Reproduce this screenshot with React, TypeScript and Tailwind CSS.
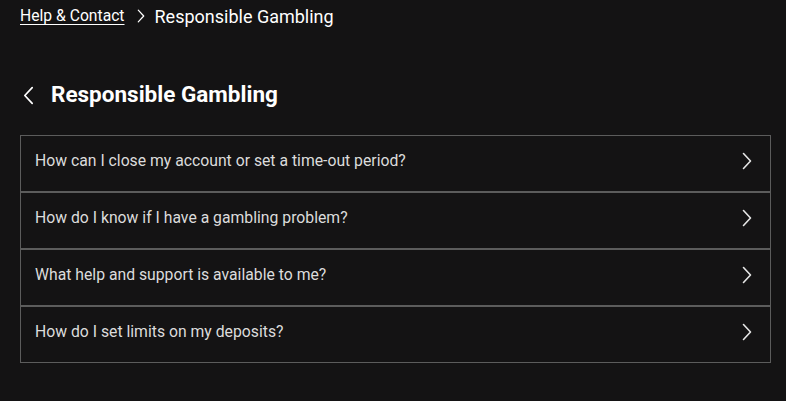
import React from "react";

const Chevron = ({ className = "" }: { className?: string }) => (
  <svg className={className} viewBox="0 0 10 18" fill="none" stroke="currentColor" strokeWidth="1.6" strokeLinecap="round" strokeLinejoin="round">
    <path d="M1.5 1.5 L8.5 9 L1.5 16.5" />
  </svg>
);

const ChevronLeft = ({ className = "" }: { className?: string }) => (
  <svg className={className} viewBox="0 0 10 18" fill="none" stroke="currentColor" strokeWidth="1.6" strokeLinecap="round" strokeLinejoin="round">
    <path d="M8.5 1.5 L1.5 9 L8.5 16.5" />
  </svg>
);

const questions = [
  "How can I close my account or set a time-out period?",
  "How do I know if I have a gambling problem?",
  "What help and support is available to me?",
  "How do I set limits on my deposits?",
];

export default function App() {
  return (
    <div className="min-h-[401px] w-full bg-[#141314] text-white px-5" style={{ fontFamily: "Roboto, 'Liberation Sans', sans-serif" }}>
      <div className="flex items-center h-[32px]">
        <a className="text-[15.7px] text-white underline underline-offset-[3px] decoration-1">Help &amp; Contact</a>
        <Chevron className="w-[8px] h-[14px] ml-[12px] mr-[10px] text-white" />
        <span className="text-[18px] text-white">Responsible Gambling</span>
      </div>
      <div className="flex items-center h-[58px] mt-[34px]">
        <ChevronLeft className="w-[11px] h-[19px] ml-[3px] text-white" />
        <h1 className="ml-[17px] text-[22.5px] font-bold">Responsible Gambling</h1>
      </div>
      <div className="mt-[11px] w-[751px]">
        {questions.map((q) => (
          <div key={q} className="flex items-center justify-between h-[57px] border border-[#5c5c5c] px-[14px] pb-[6px]">
            <span className="text-[15.75px] text-[#dcdcdc]">{q}</span>
            <Chevron className="w-[10px] h-[18px] mr-[4px] text-[#e6e6e6]" />
          </div>
        ))}
      </div>
    </div>
  );
}
